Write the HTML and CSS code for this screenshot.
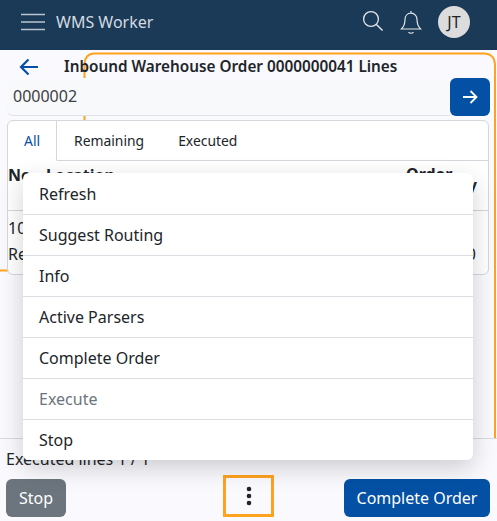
FILE: index.html
```html
<!DOCTYPE html>
<html lang="en">

<head>
    <meta charset="UTF-8">
    <meta name="viewport" content="width=device-width, initial-scale=1.0">
    <title>WMS Worker</title>
    <link rel="stylesheet" href="styles.css">
</head>

<body>
    <div class="app">
        <header class="topbar">
            <svg class="burger" width="24" height="18" viewBox="0 0 24 18">
                <path d="M0 1.500h24M0 9h24M0 16.500h24" stroke="#b9c4ce" stroke-width="1.400" fill="none" />
            </svg>
            <span class="brand">WMS Worker</span>
            <svg class="search" width="22" height="22" viewBox="0 0 22 22">
                <circle cx="9" cy="9" r="7.400" stroke="#e3e8ec" stroke-width="1.300" fill="none" />
                <path d="M14.400 14.400l6.200 6.200" stroke="#e3e8ec" stroke-width="1.400" fill="none" />
            </svg>
            <svg class="bell" width="22" height="25" viewBox="0 0 22 25">
                <path d="M11 1v2.200M11 3.200c-3.700 0-6 2.800-6 6.300 0 5.100-1 7-3.600 9.500h19.200C18 16.500 17 14.600 17 9.500c0-3.500-2.300-6.300-6-6.300zM8.500 22.300c1.300 1.200 3.700 1.200 5 0" stroke="#e3e8ec" stroke-width="1.200" fill="none" />
            </svg>
            <span class="avatar">JT</span>
        </header>

        <main class="content">
            <svg class="focus-ring" width="497" height="388" viewBox="0 0 497 388">
                <path d="M0 220.500H84.500V14C84.500 8 88 3.500 94 3.500H484C491 3.500 495 8 495 15V388" stroke="#ffa31f" stroke-width="2" fill="none" />
            </svg>
            <div class="title-row">
                <svg class="back" width="20" height="18" viewBox="0 0 20 18">
                    <path d="M19 9H2M9.500 1.500L2 9l7.500 7.500" stroke="#0450a4" stroke-width="2.200" fill="none" />
                </svg>
                <h1 class="title">Inbound Warehouse Order 0000000041 Lines</h1>
            </div>
            <div class="scan-row">
                <div class="scan-input">0000002</div>
                <button class="scan-go">
                    <svg width="16" height="14" viewBox="0 0 16 14">
                        <path d="M1 7h13.500M8.500 1l6 6-6 6" stroke="#fff" stroke-width="1.800" fill="none" />
                    </svg>
                </button>
            </div>
            <section class="card">
                <div class="tabs">
                    <span class="tab active">All</span>
                    <span class="tab">Remaining</span>
                    <span class="tab">Executed</span>
                </div>
                <div class="thead">
                    <span class="col-no">No</span>
                    <span class="col-loc">Location</span>
                    <span class="col-qty">Order<br>Quantity</span>
                </div>
                <div class="trow">
                    <div class="line">
                        <span>10</span>
                    </div>
                    <div class="line">
                        <span>Re</span>
                        <span>0</span>
                    </div>
                </div>
            </section>
        </main>

        <footer class="bottom">
            <div class="status">Executed lines 1 / 1</div>
            <div class="actions">
                <button class="btn btn-grey">Stop</button>
                <button class="kebab">
                    <svg width="6" height="20" viewBox="0 0 6 20">
                        <circle cx="3" cy="3" r="2.300" />
                        <circle cx="3" cy="10" r="2.300" />
                        <circle cx="3" cy="17" r="2.300" />
                    </svg>
                </button>
                <button class="btn btn-blue">Complete Order</button>
            </div>
        </footer>

        <ul class="menu">
            <li>Refresh</li>
            <li>Suggest Routing</li>
            <li>Info</li>
            <li>Active Parsers</li>
            <li>Complete Order</li>
            <li class="disabled">Execute</li>
            <li>Stop</li>
        </ul>
    </div>
</body>

</html>
```

FILE: styles.css
```css
* {
    box-sizing: border-box;
    margin: 0;
    padding: 0;
    list-style: none;
}

body {
    font-family: "Noto Sans", sans-serif;
    font-size: 16px;
    color: #212529;
    background-color: #f9f9fe;
    overflow: hidden;
}

.app {
    position: relative;
    display: flex;
    flex-direction: column;
    width: 497px;
    height: 521px;
}

.topbar {
    display: flex;
    align-items: center;
    height: 50px;
    padding: 0 27px 6px 21px;
    background-color: #1b3a57;
}

.burger {
    margin-right: 11px;
}

.brand {
    flex: 1;
    color: #d3dae0;
    font-size: 16px;
}

.search {
    margin: -2px 16px 0 0;
}

.bell {
    margin-right: 16px;
}

.avatar {
    display: flex;
    align-items: center;
    justify-content: center;
    width: 32px;
    height: 32px;
    border-radius: 50%;
    background-color: #dcdcdc;
    color: #212529;
    font-size: 16px;
}

.content {
    position: relative;
    flex: 1;
    padding: 0 7px;
}

.focus-ring {
    position: absolute;
    top: 0;
    left: 0;
}

.title-row {
    position: relative;
    display: flex;
    align-items: center;
    height: 28px;
}

.back {
    margin: 6px 0 0 12px;
}

.title {
    margin: 4px 0 0 25px;
    font-size: 15.3px;
    font-weight: 600;
    line-height: 20px;
    white-space: nowrap;
}

.scan-row {
    position: relative;
    display: flex;
    height: 38px;
    margin-bottom: 4px;
}

.scan-input {
    flex: 1;
    padding-left: 6px;
    border-bottom: 1px solid #e0e2ea;
    border-radius: 6px 0 0 6px;
    background-color: #f8f9fa;
    font-size: 16px;
    line-height: 37px;
    color: #3c4146;
}

.scan-go {
    display: flex;
    align-items: center;
    justify-content: center;
    width: 40px;
    border: none;
    border-radius: 6px;
    background-color: #0450a4;
}

.card {
    position: relative;
    height: 155px;
    margin-right: 1px;
    border: 1px solid #d5d7dd;
    border-radius: 6px;
    background-color: #fff;
    overflow: hidden;
}

.tabs {
    display: flex;
    height: 40px;
    border-bottom: 1px solid #d5d7dd;
    font-size: 13.9px;
    line-height: 39px;
}

.tab {
    padding: 0 17px;
}

.tab.active {
    width: 49px;
    height: 40px;
    padding: 0 16px;
    border-right: 1px solid #d5d7dd;
    border-bottom: 1px solid #fff;
    color: #0450a4;
}

.thead {
    display: flex;
    height: 50px;
    padding-top: 2px;
    border-bottom: 1px solid #d5d7dd;
    font-size: 16px;
    font-weight: 700;
    line-height: 24px;
}

.col-no {
    width: 38px;
}

.col-loc {
    flex: 1;
}

.col-qty {
    width: 82px;
    padding-top: 6px;
    line-height: 11px;
}

.trow {
    padding-top: 4px;
    font-size: 16px;
    line-height: 26px;
}

.line {
    display: flex;
    justify-content: space-between;
    padding-right: 12px;
}

.bottom {
    height: 83px;
    padding: 10px 7px 4px 6px;
    border-top: 1px solid #d8d9df;
}

.status {
    height: 26px;
    font-size: 16px;
    line-height: 20px;
}

.actions {
    display: flex;
    align-items: flex-end;
}

.btn {
    height: 38px;
    padding: 0 12px;
    border: none;
    border-radius: 6px;
    color: #fff;
    font-family: inherit;
    font-size: 16px;
}

.btn-grey {
    width: 60px;
    background-color: #6c757d;
}

.btn-blue {
    width: 146px;
    margin-left: auto;
    background-color: #0450a4;
}

.kebab {
    display: flex;
    align-items: center;
    justify-content: center;
    width: 51px;
    height: 42px;
    margin-left: 157px;
    border: 3px solid #ffa31f;
    background: none;
}

.kebab svg {
    fill: #212529;
}

.menu {
    position: absolute;
    top: 173px;
    left: 23px;
    width: 450px;
    padding-top: 1px;
    border-radius: 6px;
    background-color: #fff;
    box-shadow: 0 8px 24px rgba(0, 0, 0, 0.18);
    font-size: 16px;
}

.menu li {
    height: 41px;
    padding-left: 16px;
    border-bottom: 1px solid #dcdee4;
    line-height: 41px;
}

.menu li:last-child {
    height: 40px;
    border-bottom: none;
}

.menu li.disabled {
    color: #6c757d;
}
```
